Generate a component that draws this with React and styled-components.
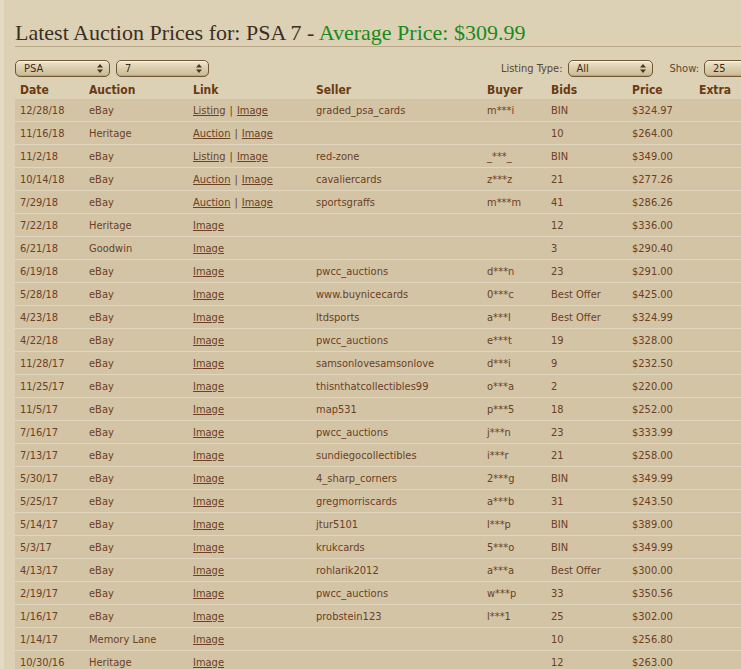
import styled, { createGlobalStyle } from "styled-components"

const GlobalStyle = createGlobalStyle`
    html, body {
        margin: 0;
        padding: 0;
        background: #dcd1b5;
        overflow: hidden;
    }
    body {
        font-family: "DejaVu Sans Condensed", "Liberation Sans", Arial, sans-serif;
        border-left: 4px solid #e3dbc6;
    }
`

const Page = styled.div`
    width: 764px;
    padding: 0 0 0 11px;
`

const Title = styled.h1`
    margin: 0;
    padding: 22px 0 2px 0;
    font-family: "Liberation Serif", "Times New Roman", serif;
    font-weight: normal;
    font-size: 22px;
    line-height: 1;
    color: #3b2e22;
    border-bottom: 1px solid #b8a889;
    white-space: nowrap;

    span {
        color: #1b8a1b;
    }
`

const Controls = styled.div`
    display: flex;
    align-items: center;
    margin-top: 13px;
    height: 17px;
`

const Group = styled.div`
    display: flex;
    align-items: center;
    gap: 6px;
    margin-left: ${props => props.right ? "auto" : "0"};
`

const Label = styled.span`
    font-size: 11px;
    color: #5b4630;
    margin-left: ${props => props.gap || 0}px;
    margin-right: -1px;
`

const Select = styled.div`
    box-sizing: border-box;
    width: ${props => props.width}px;
    height: 17px;
    border: 1px solid #6f5634;
    border-radius: 5px;
    background: linear-gradient(#efe6d0, #dccfae 45%, #cbbb95);
    box-shadow: inset 0 1px 1px rgba(255, 255, 255, 0.6), inset 0 -1px 1px rgba(120, 95, 55, 0.25);
    display: flex;
    align-items: center;
    justify-content: space-between;
    padding: 0 6px 0 8px;
    font-size: 11px;
    color: #3e2a16;

    svg {
        flex-shrink: 0;
    }
`

const Arrows = () => (
    <svg width="6" height="9" viewBox="0 0 6 9">
        <path d="M3 0 L6 3.5 L0 3.5 Z" fill="#4a3520" />
        <path d="M3 9 L6 5.5 L0 5.5 Z" fill="#4a3520" />
    </svg>
)

const Table = styled.table`
    width: 764px;
    margin-top: 5px;
    border-collapse: collapse;
    table-layout: fixed;
    font-size: 11px;
`

const Th = styled.th`
    text-align: left;
    font-weight: bold;
    font-size: 12px;
    color: #6a3a12;
    padding: 0 0 0 5px;
    height: 17px;
    line-height: 17px;
`

const Row = styled.tr`
    background: #d3c4a6;
    border-bottom: 1px solid #e2d7be;
`

const Td = styled.td`
    color: #6c4024;
    padding: 0 0 0 5px;
    height: 22px;
    white-space: nowrap;
    overflow: hidden;
`

const Link = styled.a`
    color: #6c4024;
    text-decoration: underline;
    cursor: pointer;
`

const Sep = styled.span`
    margin: 0 4px;
`

const columns = [69, 104, 123, 171, 64, 81, 67, 85]

const sales = [
    ["12/28/18", "eBay", ["Listing", "Image"], "graded_psa_cards", "m***i", "BIN", "$324.97"],
    ["11/16/18", "Heritage", ["Auction", "Image"], "", "", "10", "$264.00"],
    ["11/2/18", "eBay", ["Listing", "Image"], "red-zone", "_***_", "BIN", "$349.00"],
    ["10/14/18", "eBay", ["Auction", "Image"], "cavaliercards", "z***z", "21", "$277.26"],
    ["7/29/18", "eBay", ["Auction", "Image"], "sportsgraffs", "m***m", "41", "$286.26"],
    ["7/22/18", "Heritage", ["Image"], "", "", "12", "$336.00"],
    ["6/21/18", "Goodwin", ["Image"], "", "", "3", "$290.40"],
    ["6/19/18", "eBay", ["Image"], "pwcc_auctions", "d***n", "23", "$291.00"],
    ["5/28/18", "eBay", ["Image"], "www.buynicecards", "0***c", "Best Offer", "$425.00"],
    ["4/23/18", "eBay", ["Image"], "ltdsports", "a***l", "Best Offer", "$324.99"],
    ["4/22/18", "eBay", ["Image"], "pwcc_auctions", "e***t", "19", "$328.00"],
    ["11/28/17", "eBay", ["Image"], "samsonlovesamsonlove", "d***i", "9", "$232.50"],
    ["11/25/17", "eBay", ["Image"], "thisnthatcollectibles99", "o***a", "2", "$220.00"],
    ["11/5/17", "eBay", ["Image"], "map531", "p***5", "18", "$252.00"],
    ["7/16/17", "eBay", ["Image"], "pwcc_auctions", "j***n", "23", "$333.99"],
    ["7/13/17", "eBay", ["Image"], "sundiegocollectibles", "i***r", "21", "$258.00"],
    ["5/30/17", "eBay", ["Image"], "4_sharp_corners", "2***g", "BIN", "$349.99"],
    ["5/25/17", "eBay", ["Image"], "gregmorriscards", "a***b", "31", "$243.50"],
    ["5/14/17", "eBay", ["Image"], "jtur5101", "l***p", "BIN", "$389.00"],
    ["5/3/17", "eBay", ["Image"], "krukcards", "5***o", "BIN", "$349.99"],
    ["4/13/17", "eBay", ["Image"], "rohlarik2012", "a***a", "Best Offer", "$300.00"],
    ["2/19/17", "eBay", ["Image"], "pwcc_auctions", "w***p", "33", "$350.56"],
    ["1/16/17", "eBay", ["Image"], "probstein123", "l***1", "25", "$302.00"],
    ["1/14/17", "Memory Lane", ["Image"], "", "", "10", "$256.80"],
    ["10/30/16", "Heritage", ["Image"], "", "", "12", "$263.00"],
]

export default () => {
    return (
        <Page>
            <GlobalStyle />
            <Title>Latest Auction Prices for: PSA 7 - <span>Average Price: $309.99</span></Title>
            <Controls>
                <Group>
                    <Select width={95}>PSA<Arrows /></Select>
                    <Select width={93}>7<Arrows /></Select>
                </Group>
                <Group right>
                    <Label>Listing Type:</Label>
                    <Select width={85}>All<Arrows /></Select>
                    <Label gap={11}>Show:</Label>
                    <Select width={75}>25<Arrows /></Select>
                </Group>
            </Controls>
            <Table>
                <colgroup>
                    {columns.map((w, i) => <col key={i} style={{ width: w }} />)}
                </colgroup>
                <thead>
                    <tr>
                        {["Date", "Auction", "Link", "Seller", "Buyer", "Bids", "Price", "Extra"].map(h => <Th key={h}>{h}</Th>)}
                    </tr>
                </thead>
                <tbody>
                    {sales.map((s, i) => (
                        <Row key={i}>
                            <Td>{s[0]}</Td>
                            <Td>{s[1]}</Td>
                            <Td>
                                {s[2].map((l, j) => (
                                    <span key={l}>
                                        {j > 0 && <Sep>|</Sep>}
                                        <Link>{l}</Link>
                                    </span>
                                ))}
                            </Td>
                            <Td>{s[3]}</Td>
                            <Td>{s[4]}</Td>
                            <Td>{s[5]}</Td>
                            <Td>{s[6]}</Td>
                            <Td></Td>
                        </Row>
                    ))}
                </tbody>
            </Table>
        </Page>
    )
}
